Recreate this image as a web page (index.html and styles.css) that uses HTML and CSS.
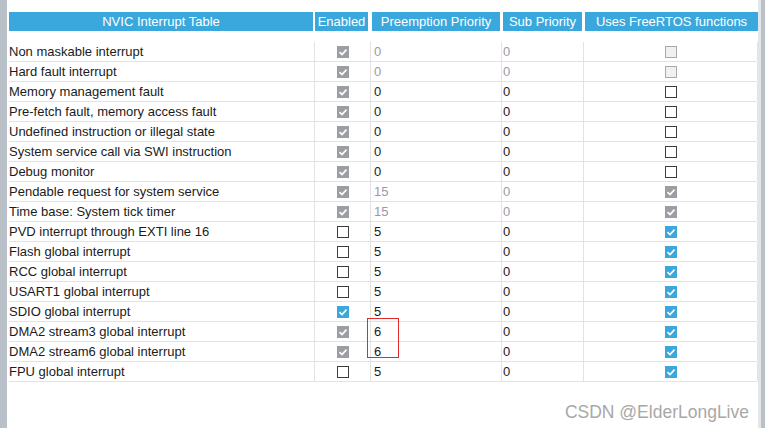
FILE: index.html
```html
<!DOCTYPE html>
<html lang="en">
<head>
  <meta charset="UTF-8">
  <meta name="viewport" content="width=device-width, initial-scale=1.0">
  <title>NVIC Interrupt Table</title>
  <link rel="stylesheet" href="styles.css">
</head>
<body>

<div class="page">
  <div class="side-left"></div>

  <div class="main">
    <div class="grid head">
      <div class="hcell c1">NVIC Interrupt Table</div>
      <div class="hcell c2">Enabled</div>
      <div class="hcell c3">Preemption Priority</div>
      <div class="hcell c4">Sub Priority</div>
      <div class="hcell c5">Uses FreeRTOS functions</div>
    </div>

    <div class="rows">
      <div class="grid row">
        <div class="cell name">Non maskable interrupt</div>
        <div class="cell box"><span class="cb dis-on"><svg viewBox="0 0 12 12"><polyline points="2.5,6.2 5,8.6 9.5,3.6"/></svg></span></div>
        <div class="cell num muted">0</div>
        <div class="cell num muted">0</div>
        <div class="cell box end"><span class="cb dis-off"></span></div>
      </div>
      <div class="grid row">
        <div class="cell name">Hard fault interrupt</div>
        <div class="cell box"><span class="cb dis-on"><svg viewBox="0 0 12 12"><polyline points="2.5,6.2 5,8.6 9.5,3.6"/></svg></span></div>
        <div class="cell num muted">0</div>
        <div class="cell num muted">0</div>
        <div class="cell box end"><span class="cb dis-off"></span></div>
      </div>
      <div class="grid row">
        <div class="cell name">Memory management fault</div>
        <div class="cell box"><span class="cb dis-on"><svg viewBox="0 0 12 12"><polyline points="2.5,6.2 5,8.6 9.5,3.6"/></svg></span></div>
        <div class="cell num">0</div>
        <div class="cell num">0</div>
        <div class="cell box end"><span class="cb off"></span></div>
      </div>
      <div class="grid row">
        <div class="cell name">Pre-fetch fault, memory access fault</div>
        <div class="cell box"><span class="cb dis-on"><svg viewBox="0 0 12 12"><polyline points="2.5,6.2 5,8.6 9.5,3.6"/></svg></span></div>
        <div class="cell num">0</div>
        <div class="cell num">0</div>
        <div class="cell box end"><span class="cb off"></span></div>
      </div>
      <div class="grid row">
        <div class="cell name">Undefined instruction or illegal state</div>
        <div class="cell box"><span class="cb dis-on"><svg viewBox="0 0 12 12"><polyline points="2.5,6.2 5,8.6 9.5,3.6"/></svg></span></div>
        <div class="cell num">0</div>
        <div class="cell num">0</div>
        <div class="cell box end"><span class="cb off"></span></div>
      </div>
      <div class="grid row">
        <div class="cell name">System service call via SWI instruction</div>
        <div class="cell box"><span class="cb dis-on"><svg viewBox="0 0 12 12"><polyline points="2.5,6.2 5,8.6 9.5,3.6"/></svg></span></div>
        <div class="cell num">0</div>
        <div class="cell num">0</div>
        <div class="cell box end"><span class="cb off"></span></div>
      </div>
      <div class="grid row">
        <div class="cell name">Debug monitor</div>
        <div class="cell box"><span class="cb dis-on"><svg viewBox="0 0 12 12"><polyline points="2.5,6.2 5,8.6 9.5,3.6"/></svg></span></div>
        <div class="cell num">0</div>
        <div class="cell num">0</div>
        <div class="cell box end"><span class="cb off"></span></div>
      </div>
      <div class="grid row">
        <div class="cell name">Pendable request for system service</div>
        <div class="cell box"><span class="cb dis-on"><svg viewBox="0 0 12 12"><polyline points="2.5,6.2 5,8.6 9.5,3.6"/></svg></span></div>
        <div class="cell num muted">15</div>
        <div class="cell num muted">0</div>
        <div class="cell box end"><span class="cb dis-on"><svg viewBox="0 0 12 12"><polyline points="2.5,6.2 5,8.6 9.5,3.6"/></svg></span></div>
      </div>
      <div class="grid row">
        <div class="cell name">Time base: System tick timer</div>
        <div class="cell box"><span class="cb dis-on"><svg viewBox="0 0 12 12"><polyline points="2.5,6.2 5,8.6 9.5,3.6"/></svg></span></div>
        <div class="cell num muted">15</div>
        <div class="cell num muted">0</div>
        <div class="cell box end"><span class="cb dis-on"><svg viewBox="0 0 12 12"><polyline points="2.5,6.2 5,8.6 9.5,3.6"/></svg></span></div>
      </div>
      <div class="grid row">
        <div class="cell name">PVD interrupt through EXTI line 16</div>
        <div class="cell box"><span class="cb off"></span></div>
        <div class="cell num">5</div>
        <div class="cell num">0</div>
        <div class="cell box end"><span class="cb on"><svg viewBox="0 0 12 12"><polyline points="2.5,6.2 5,8.6 9.5,3.6"/></svg></span></div>
      </div>
      <div class="grid row">
        <div class="cell name">Flash global interrupt</div>
        <div class="cell box"><span class="cb off"></span></div>
        <div class="cell num">5</div>
        <div class="cell num">0</div>
        <div class="cell box end"><span class="cb on"><svg viewBox="0 0 12 12"><polyline points="2.5,6.2 5,8.6 9.5,3.6"/></svg></span></div>
      </div>
      <div class="grid row">
        <div class="cell name">RCC global interrupt</div>
        <div class="cell box"><span class="cb off"></span></div>
        <div class="cell num">5</div>
        <div class="cell num">0</div>
        <div class="cell box end"><span class="cb on"><svg viewBox="0 0 12 12"><polyline points="2.5,6.2 5,8.6 9.5,3.6"/></svg></span></div>
      </div>
      <div class="grid row">
        <div class="cell name">USART1 global interrupt</div>
        <div class="cell box"><span class="cb off"></span></div>
        <div class="cell num">5</div>
        <div class="cell num">0</div>
        <div class="cell box end"><span class="cb on"><svg viewBox="0 0 12 12"><polyline points="2.5,6.2 5,8.6 9.5,3.6"/></svg></span></div>
      </div>
      <div class="grid row">
        <div class="cell name">SDIO global interrupt</div>
        <div class="cell box"><span class="cb on"><svg viewBox="0 0 12 12"><polyline points="2.5,6.2 5,8.6 9.5,3.6"/></svg></span></div>
        <div class="cell num">5</div>
        <div class="cell num">0</div>
        <div class="cell box end"><span class="cb on"><svg viewBox="0 0 12 12"><polyline points="2.5,6.2 5,8.6 9.5,3.6"/></svg></span></div>
      </div>
      <div class="grid row">
        <div class="cell name">DMA2 stream3 global interrupt</div>
        <div class="cell box"><span class="cb dis-on"><svg viewBox="0 0 12 12"><polyline points="2.5,6.2 5,8.6 9.5,3.6"/></svg></span></div>
        <div class="cell num">6</div>
        <div class="cell num">0</div>
        <div class="cell box end"><span class="cb on"><svg viewBox="0 0 12 12"><polyline points="2.5,6.2 5,8.6 9.5,3.6"/></svg></span></div>
      </div>
      <div class="grid row">
        <div class="cell name">DMA2 stream6 global interrupt</div>
        <div class="cell box"><span class="cb dis-on"><svg viewBox="0 0 12 12"><polyline points="2.5,6.2 5,8.6 9.5,3.6"/></svg></span></div>
        <div class="cell num">6</div>
        <div class="cell num">0</div>
        <div class="cell box end"><span class="cb on"><svg viewBox="0 0 12 12"><polyline points="2.5,6.2 5,8.6 9.5,3.6"/></svg></span></div>
      </div>
      <div class="grid row">
        <div class="cell name">FPU global interrupt</div>
        <div class="cell box"><span class="cb off"></span></div>
        <div class="cell num">5</div>
        <div class="cell num">0</div>
        <div class="cell box end"><span class="cb on"><svg viewBox="0 0 12 12"><polyline points="2.5,6.2 5,8.6 9.5,3.6"/></svg></span></div>
      </div>

      <!-- red highlight round the two DMA priorities -->
      <div class="mark"></div>
    </div>

    <div class="watermark">CSDN @ElderLongLive</div>
  </div>

  <div class="side-right"></div>
</div>

</body>
</html>
```

FILE: styles.css
```css
body {
  margin: 0;
  padding: 0;
  background: #fff;
  font-family: "Liberation Sans", Arial, sans-serif;
  font-size: 13px;
  color: #1b1b1b;
}
.page {
  display: flex;
  height: 428px;
  overflow: hidden;
}
.side-left {
  width: 7px;
  background: #b9c0c7;
  margin-right: 2px;
}
.side-right {
  width: 3px;
  background: #e3e6e9;
  border-right: 4px solid #b9c0c7;
}
.main {
  width: 749px;
  padding-top: 12px;
}
.grid {
  display: grid;
  grid-template-columns: 306px 56px 131px 82px 174px;
}
.hcell {
  background: #3aa8dc;
  color: #fff;
  height: 19px;
  line-height: 19px;
  text-align: center;
  white-space: nowrap;
}
.hcell.c1 { margin-right: 2px; }
.hcell.c2 { margin-right: 3px; }
.hcell.c3 { margin: 0 2px 0 1px; }
.hcell.c4 { margin: 0 2px 0 1px; }
.hcell.c5 { margin-left: 1px; }
.rows {
  position: relative;
  margin-top: 11px;
}
.row {
  height: 20px;
  border-bottom: 1px solid #e3e3e3;
  box-sizing: border-box;
  margin-right: 1px;
}
.cell {
  line-height: 19px;
  white-space: nowrap;
  border-right: 1px solid #e3e3e3;
}
.cell.name {
  padding-left: 0;
}
.cell.num {
  padding-left: 3px;
}
.cell.num + .cell.num {
  padding-left: 1px;
}
.muted {
  color: #9a99a8;
}
.cell.box {
  display: flex;
  align-items: center;
  justify-content: center;
}
.cb {
  display: block;
  width: 12px;
  height: 12px;
  box-sizing: border-box;
}
.cb svg {
  display: block;
  width: 12px;
  height: 12px;
}
.cb polyline {
  fill: none;
  stroke: #fff;
  stroke-width: 1.6;
}
.cb.dis-on {
  background: #9b9ea3;
}
.cb.on {
  background: #3aa8dc;
}
.cb.off {
  background: #fff;
  border: 1px solid #3c3c3c;
}
.cb.dis-off {
  background: #f0f0f0;
  border: 1px solid #a9a9a9;
}
.mark {
  position: absolute;
  left: 358px;
  top: 276px;
  width: 32px;
  height: 40px;
  box-sizing: border-box;
  border: 1px solid #e22a2a;
}
.watermark {
  margin-top: 20px;
  padding-right: 9px;
  text-align: right;
  font-size: 17.5px;
  line-height: 20px;
  color: #a8a8a8;
}
```
